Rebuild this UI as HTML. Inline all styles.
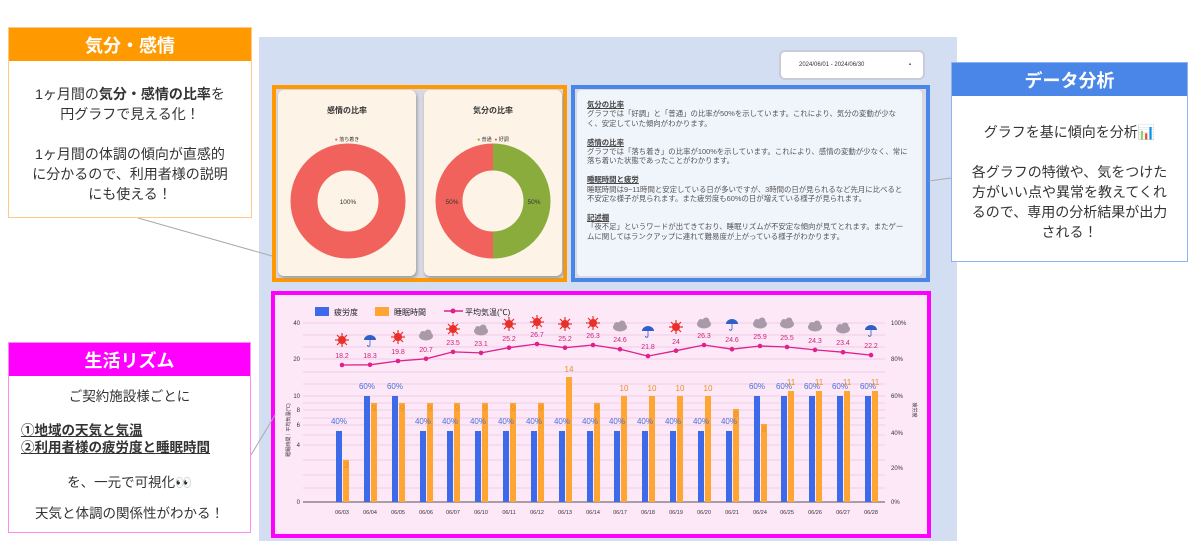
<!DOCTYPE html>
<html><head><meta charset="utf-8"><style>
*{margin:0;padding:0;box-sizing:border-box}
body{width:1200px;height:547px;background:#fff;position:relative;overflow:hidden;font-family:"Liberation Sans","Noto Sans CJK JP",sans-serif;color:#333}
.abs{position:absolute}
.call{position:absolute;background:#fff;text-align:center}
.call .h{color:#fff;font-weight:bold;font-size:18px;display:flex;align-items:center;justify-content:center}
.call .b{font-size:14px;line-height:20px;color:#333}
.card{position:absolute;background:#fdf3e7;border-radius:6px;box-shadow:1px 2px 3px #999}
.ct{font-size:8px;font-weight:bold;text-align:center;color:#333}
.an{font-size:7.4px;line-height:9.4px;color:#555}
.an u{font-weight:bold;color:#444}
.ln{position:absolute;left:0;width:100%;font-size:13.5px;line-height:16px;color:#333}
</style></head><body>
<div class="abs" style="left:259px;top:37px;width:698px;height:504px;background:#d4def2"></div>
<div class="abs" style="left:781px;top:52px;width:142px;height:26px;background:#fff;border-radius:4px;box-shadow:0 0 0 2px #c8ccd8;font-size:6px;line-height:26px;padding-left:18px;color:#333">2024/06/01 - 2024/06/30<span style="position:absolute;right:12px">▪</span></div>

<div class="abs" style="left:272px;top:85px;width:295px;height:197px;border:4px solid #ff9900;background:#d7d8e3"></div>
<div class="card" style="left:278px;top:90px;width:138px;height:186px">
 <div class="ct" style="margin-top:15px">感情の比率</div>
 <div style="font-size:5px;text-align:center;margin-top:20px"><span style="color:#f0605a">●</span> 落ち着き</div>
 <svg class="abs" style="left:0;top:0" width="138" height="186"><circle cx="70" cy="111" r="44" fill="none" stroke="#f0625b" stroke-width="27"/><text x="70" y="114" font-size="6.5" text-anchor="middle" fill="#333">100%</text></svg>
</div>
<div class="card" style="left:424px;top:90px;width:138px;height:186px">
 <div class="ct" style="margin-top:15px">気分の比率</div>
 <div style="font-size:5px;text-align:center;margin-top:20px"><span style="color:#8aac3c">●</span> 普通 &nbsp;<span style="color:#f0605a">●</span> 好調</div>
 <svg class="abs" style="left:0;top:0" width="138" height="186"><path d="M69 67 A44 44 0 0 1 69 155" fill="none" stroke="#8aac3c" stroke-width="27"/><path d="M69 155 A44 44 0 0 1 69 67" fill="none" stroke="#f0625b" stroke-width="27"/><text x="28" y="114" font-size="6.5" text-anchor="middle" fill="#333">50%</text><text x="110" y="114" font-size="6.5" text-anchor="middle" fill="#333">50%</text></svg>
</div>

<div class="abs" style="left:571px;top:85px;width:359px;height:197px;border:4px solid #4a86e8;background:#d7d8e3"></div>
<div class="abs" style="left:577px;top:90px;width:345px;height:186px;background:#f0f4fb;border-radius:4px;padding:10px 14px 0 10px">
 <div class="an"><u>気分の比率</u><br>グラフでは「好調」と「普通」の比率が50%を示しています。これにより、気分の変動が少なく、安定していた傾向がわかります。<br><br><u>感情の比率</u><br>グラフでは「落ち着き」の比率が100%を示しています。これにより、感情の変動が少なく、常に落ち着いた状態であったことがわかります。<br><br><u>睡眠時間と疲労</u><br>睡眠時間は9~11時間と安定している日が多いですが、3時間の日が見られるなど先月に比べると不安定な様子が見られます。また疲労度も60%の日が増えている様子が見られます。<br><br><u>記述欄</u><br>「夜不足」というワードが出てきており、睡眠リズムが不安定な傾向が見てとれます。またゲームに関してはランクアップに連れて難易度が上がっている様子がわかります。</div>
</div>

<div class="abs" style="left:271px;top:291px;width:660px;height:247px;border:4px solid #ff00ff;background:#fde8f8"></div>

<svg class="abs" style="left:0;top:0" width="1200" height="547">
<line x1="138" y1="218" x2="272" y2="256" stroke="#aaa" stroke-width="1"/>
<line x1="929" y1="181" x2="951" y2="178" stroke="#aaa"/>
<line x1="251" y1="455" x2="275" y2="415" stroke="#aaa"/>
</svg>

<svg class="abs" style="left:0;top:0" width="1200" height="547" font-family="Liberation Sans, Noto Sans CJK JP, sans-serif">
<g stroke="#f0cde6" stroke-width="1">
<line x1="303" y1="323" x2="885" y2="323"/><line x1="303" y1="335" x2="885" y2="335"/><line x1="303" y1="347" x2="885" y2="347"/><line x1="303" y1="359" x2="885" y2="359"/><line x1="303" y1="372" x2="885" y2="372"/><line x1="303" y1="384" x2="885" y2="384"/><line x1="303" y1="396" x2="885" y2="396"/><line x1="303" y1="403" x2="885" y2="403"/><line x1="303" y1="410" x2="885" y2="410"/><line x1="303" y1="418" x2="885" y2="418"/><line x1="303" y1="425" x2="885" y2="425"/><line x1="303" y1="435" x2="885" y2="435"/><line x1="303" y1="445" x2="885" y2="445"/><line x1="303" y1="460" x2="885" y2="460"/><line x1="303" y1="475" x2="885" y2="475"/><line x1="303" y1="488" x2="885" y2="488"/>
</g>
<line x1="303" y1="502" x2="885" y2="502" stroke="#555" stroke-width="1"/>
<g font-size="6" fill="#333">
<text x="300" y="325" text-anchor="end">40</text><text x="300" y="361" text-anchor="end">20</text><text x="300" y="398" text-anchor="end">10</text><text x="300" y="412" text-anchor="end">8</text><text x="300" y="427" text-anchor="end">6</text><text x="300" y="447" text-anchor="end">4</text><text x="300" y="504" text-anchor="end">0</text>
<text x="891" y="325">100%</text><text x="891" y="361">80%</text><text x="891" y="398">60%</text><text x="891" y="435">40%</text><text x="891" y="470">20%</text><text x="891" y="504">0%</text>
<text transform="translate(290,430) rotate(-90)" font-size="5" text-anchor="middle">睡眠時間｜平均気温(℃)</text>
<text transform="translate(913,410) rotate(90)" font-size="5" text-anchor="middle">疲労度</text>
</g>
<rect x="315" y="307" width="14" height="9" fill="#3d6ae8"/><text x="334" y="315" font-size="8" fill="#222">疲労度</text>
<rect x="375" y="307" width="14" height="9" fill="#ffa534"/><text x="394" y="315" font-size="8" fill="#222">睡眠時間</text>
<line x1="444" y1="311" x2="463" y2="311" stroke="#e0208c" stroke-width="1.5"/><circle cx="453" cy="311" r="2.5" fill="#e0208c"/><text x="465" y="315" font-size="8" fill="#222">平均気温(℃)</text>
<g fill="#3d6ae8">
<rect x="336" y="431" width="6" height="71"/><rect x="364" y="396" width="6" height="106"/><rect x="392" y="396" width="6" height="106"/><rect x="420" y="431" width="6" height="71"/><rect x="447" y="431" width="6" height="71"/><rect x="475" y="431" width="6" height="71"/><rect x="503" y="431" width="6" height="71"/><rect x="531" y="431" width="6" height="71"/><rect x="559" y="431" width="6" height="71"/><rect x="587" y="431" width="6" height="71"/><rect x="614" y="431" width="6" height="71"/><rect x="642" y="431" width="6" height="71"/><rect x="670" y="431" width="6" height="71"/><rect x="698" y="431" width="6" height="71"/><rect x="726" y="431" width="6" height="71"/><rect x="754" y="396" width="6" height="106"/><rect x="781" y="396" width="6" height="106"/><rect x="809" y="396" width="6" height="106"/><rect x="837" y="396" width="6" height="106"/><rect x="865" y="396" width="6" height="106"/>
</g>
<g fill="#ffa534">
<rect x="343" y="460" width="6" height="42"/><rect x="371" y="403" width="6" height="99"/><rect x="399" y="403" width="6" height="99"/><rect x="427" y="403" width="6" height="99"/><rect x="454" y="403" width="6" height="99"/><rect x="482" y="403" width="6" height="99"/><rect x="510" y="403" width="6" height="99"/><rect x="538" y="403" width="6" height="99"/><rect x="566" y="377" width="6" height="125"/><rect x="594" y="403" width="6" height="99"/><rect x="621" y="396" width="6" height="106"/><rect x="649" y="396" width="6" height="106"/><rect x="677" y="396" width="6" height="106"/><rect x="705" y="396" width="6" height="106"/><rect x="733" y="409" width="6" height="93"/><rect x="761" y="424" width="6" height="78"/><rect x="788" y="391" width="6" height="111"/><rect x="816" y="391" width="6" height="111"/><rect x="844" y="391" width="6" height="111"/><rect x="872" y="391" width="6" height="111"/>
</g>
<g font-size="8" fill="#4a6fd8" text-anchor="middle">
<text x="339" y="424">40%</text><text x="367" y="389">60%</text><text x="395" y="389">60%</text><text x="423" y="424">40%</text><text x="450" y="424">40%</text><text x="478" y="424">40%</text><text x="506" y="424">40%</text><text x="534" y="424">40%</text><text x="562" y="424">40%</text><text x="590" y="424">40%</text><text x="617" y="424">40%</text><text x="645" y="424">40%</text><text x="673" y="424">40%</text><text x="701" y="424">40%</text><text x="729" y="424">40%</text><text x="757" y="389">60%</text><text x="784" y="389">60%</text><text x="812" y="389">60%</text><text x="840" y="389">60%</text><text x="868" y="389">60%</text>
</g>
<g font-size="8" fill="#e89020" text-anchor="middle">
<text x="346" y="468">3</text><text x="374" y="411">9</text><text x="402" y="411">9</text><text x="430" y="411">9</text><text x="457" y="411">9</text><text x="485" y="411">9</text><text x="513" y="411">9</text><text x="541" y="411">9</text><text x="569" y="372">14</text><text x="597" y="411">9</text><text x="624" y="391">10</text><text x="652" y="391">10</text><text x="680" y="391">10</text><text x="708" y="391">10</text><text x="736" y="417">8</text><text x="764" y="432">6</text><text x="791" y="385">11</text><text x="819" y="385">11</text><text x="847" y="385">11</text><text x="875" y="385">11</text>
</g>
<g font-size="5.5" fill="#333" text-anchor="middle">
<text x="342" y="514">06/03</text><text x="370" y="514">06/04</text><text x="398" y="514">06/05</text><text x="426" y="514">06/06</text><text x="453" y="514">06/07</text><text x="481" y="514">06/10</text><text x="509" y="514">06/11</text><text x="537" y="514">06/12</text><text x="565" y="514">06/13</text><text x="593" y="514">06/14</text><text x="620" y="514">06/17</text><text x="648" y="514">06/18</text><text x="676" y="514">06/19</text><text x="704" y="514">06/20</text><text x="732" y="514">06/21</text><text x="760" y="514">06/24</text><text x="787" y="514">06/25</text><text x="815" y="514">06/26</text><text x="843" y="514">06/27</text><text x="871" y="514">06/28</text>
</g>
<polyline fill="none" stroke="#e0208c" stroke-width="1.3" points="342,365 370,364.8 398,361 426,358.8 453,351.9 481,352.9 509,347.7 537,344 565,347.7 593,345 620,349.2 648,356.1 676,350.7 704,345 732,349.2 760,346 787,347 815,349.9 843,352.2 871,355.1"/>
<g fill="#e0208c">
<circle cx="342" cy="365" r="2.3"/><circle cx="370" cy="364.8" r="2.3"/><circle cx="398" cy="361" r="2.3"/><circle cx="426" cy="358.8" r="2.3"/><circle cx="453" cy="351.9" r="2.3"/><circle cx="481" cy="352.9" r="2.3"/><circle cx="509" cy="347.7" r="2.3"/><circle cx="537" cy="344" r="2.3"/><circle cx="565" cy="347.7" r="2.3"/><circle cx="593" cy="345" r="2.3"/><circle cx="620" cy="349.2" r="2.3"/><circle cx="648" cy="356.1" r="2.3"/><circle cx="676" cy="350.7" r="2.3"/><circle cx="704" cy="345" r="2.3"/><circle cx="732" cy="349.2" r="2.3"/><circle cx="760" cy="346" r="2.3"/><circle cx="787" cy="347" r="2.3"/><circle cx="815" cy="349.9" r="2.3"/><circle cx="843" cy="352.2" r="2.3"/><circle cx="871" cy="355.1" r="2.3"/>
</g>
<g font-size="7" fill="#d0207e" text-anchor="middle">
<text x="342" y="358">18.2</text><text x="370" y="358">18.3</text><text x="398" y="354">19.8</text><text x="426" y="352">20.7</text><text x="453" y="345">23.5</text><text x="481" y="346">23.1</text><text x="509" y="341">25.2</text><text x="537" y="337">26.7</text><text x="565" y="341">25.2</text><text x="593" y="338">26.3</text><text x="620" y="342">24.6</text><text x="648" y="349">21.8</text><text x="676" y="344">24</text><text x="704" y="338">26.3</text><text x="732" y="342">24.6</text><text x="760" y="339">25.9</text><text x="787" y="340">25.5</text><text x="815" y="343">24.3</text><text x="843" y="345">23.4</text><text x="871" y="348">22.2</text>
</g>
<defs>
<g id="sun"><circle r="4" fill="#e8302a"/><g stroke="#e8302a" stroke-width="1.2"><line x1="0" y1="-7" x2="0" y2="7"/><line x1="-7" y1="0" x2="7" y2="0"/><line x1="-5" y1="-5" x2="5" y2="5"/><line x1="-5" y1="5" x2="5" y2="-5"/></g></g>
<g id="rain"><path d="M-6 0 A6 5 0 0 1 6 0 Z" fill="#2f5fc8"/><path d="M0 0 V5 a1.3 1.3 0 0 1 -2.6 0" stroke="#2f5fc8" fill="none" stroke-width="0.8"/></g>
<g id="cld"><ellipse rx="7" ry="4.5" fill="#a89aa8"/><circle cx="-3" cy="-2" r="3" fill="#a89aa8"/><circle cx="2" cy="-3" r="3.5" fill="#a89aa8"/></g>
</defs>
<use href="#sun" x="342" y="340"/><use href="#rain" x="370" y="340"/><use href="#sun" x="398" y="337"/><use href="#cld" x="426" y="336"/><use href="#sun" x="453" y="329"/><use href="#cld" x="481" y="331"/><use href="#sun" x="509" y="324"/><use href="#sun" x="537" y="322"/><use href="#sun" x="565" y="324"/><use href="#sun" x="593" y="323"/><use href="#cld" x="620" y="327"/><use href="#rain" x="648" y="331"/><use href="#sun" x="676" y="327"/><use href="#cld" x="704" y="324"/><use href="#rain" x="732" y="324"/><use href="#cld" x="760" y="324"/><use href="#cld" x="787" y="324"/><use href="#cld" x="815" y="327"/><use href="#cld" x="843" y="329"/><use href="#rain" x="871" y="330"/>
</svg>

<div class="call" style="left:8px;top:27px;width:244px;height:191px;border:1px solid #ffc98a">
 <div class="h" style="background:#ff9900;height:33px">気分・感情</div>
 <div class="b" style="margin-top:23px">1ヶ月間の<b>気分・感情の比率</b>を<br>円グラフで見える化！<br><br>1ヶ月間の体調の傾向が直感的<br>に分かるので、利用者様の説明<br>にも使える！</div>
</div>
<div class="call" style="left:951px;top:62px;width:237px;height:200px;border:1px solid #8fb3ef">
 <div class="h" style="background:#4a86e8;height:33px">データ分析</div>
 <div class="b" style="margin-top:26px">グラフを基に傾向を分析📊<br><br>各グラフの特徴や、気をつけた<br>方がいい点や異常を教えてくれ<br>るので、専用の分析結果が出力<br>される！</div>
</div>
<div class="call" style="left:8px;top:342px;width:243px;height:191px;border:1px solid #ff8cf0">
 <div class="h" style="background:#ff00ff;height:33px">生活リズム</div>
 <div class="ln" style="top:46px">ご契約施設様ごとに</div>
 <div class="ln" style="top:80px;text-align:left;padding-left:12px;font-weight:bold;text-decoration:underline">①地域の天気と気温</div>
 <div class="ln" style="top:97px;text-align:left;padding-left:12px;font-weight:bold;text-decoration:underline">②利用者様の疲労度と睡眠時間</div>
 <div class="ln" style="top:132px">を、一元で可視化👀</div>
 <div class="ln" style="top:163px">天気と体調の関係性がわかる！</div>
</div>
</body></html>
